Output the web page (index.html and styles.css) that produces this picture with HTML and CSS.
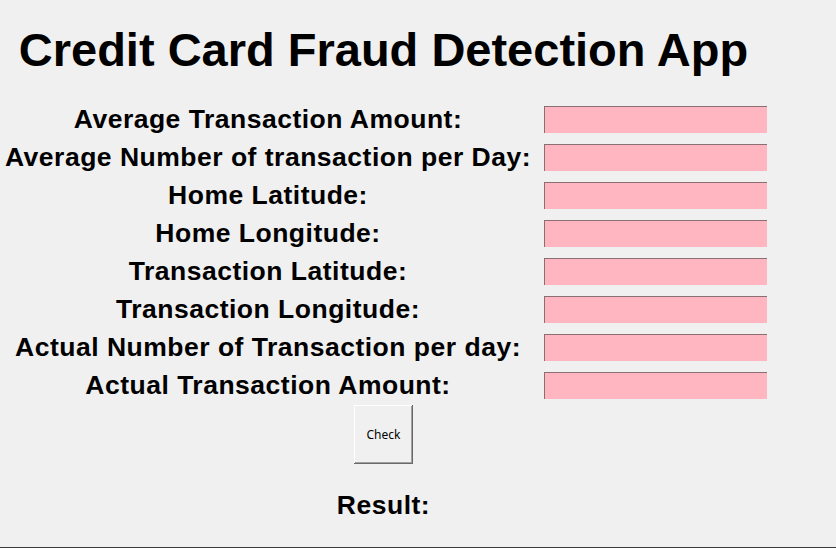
FILE: index.html
```html
<!DOCTYPE html>
<html>
<head>
<meta charset="utf-8">
<link rel="stylesheet" href="styles.css">
</head>
<body>
<div class="window">
  <div class="form">
    <h1 class="title">Credit Card Fraud Detection App</h1>
    <div class="label">Average Transaction Amount:</div><div class="cell"><div class="entry"></div></div>
    <div class="label">Average Number of transaction per Day:</div><div class="cell"><div class="entry"></div></div>
    <div class="label">Home Latitude:</div><div class="cell"><div class="entry"></div></div>
    <div class="label">Home Longitude:</div><div class="cell"><div class="entry"></div></div>
    <div class="label">Transaction Latitude:</div><div class="cell"><div class="entry"></div></div>
    <div class="label">Transaction Longitude:</div><div class="cell"><div class="entry"></div></div>
    <div class="label">Actual Number of Transaction per day:</div><div class="cell"><div class="entry"></div></div>
    <div class="label">Actual Transaction Amount:</div><div class="cell"><div class="entry"></div></div>
    <div class="span"><button class="btn">Check</button></div>
    <div class="span result">Result:</div>
  </div>
</div>
</body>
</html>
```
FILE: styles.css
```css
html, body {
  margin: 0;
  padding: 0;
  background: #f0f0f0;
}
.window {
  width: 836px;
  height: 547px;
  border-bottom: 1px solid #3a3a3a;
  background: #f0f0f0;
  overflow: hidden;
}
.form {
  display: grid;
  grid-template-columns: 536px 231px;
  grid-auto-rows: 38px;
  grid-template-rows: 100px;
  font-family: "Liberation Sans", Arial, sans-serif;
  font-weight: bold;
  color: #000;
}
.title {
  grid-column: 1 / 3;
  margin: 0;
  font-size: 47px;
  font-weight: bold;
  text-align: center;
  line-height: 100px;
  height: 100px;
}
.label {
  font-size: 26.5px;
  letter-spacing: 0.5px;
  text-align: center;
  line-height: 38px;
  white-space: nowrap;
}
.cell {
  padding-top: 6px;
  padding-left: 8px;
}
.entry {
  width: 222px;
  height: 26px;
  background: #ffb6c1;
  border-top: 1px solid #8a6e72;
  border-left: 1px solid #8a6e72;
}
.span {
  grid-column: 1 / 3;
  display: flex;
  justify-content: center;
}
.btn {
  margin-top: 1px;
  width: 59px;
  height: 59px;
  background: #f0f0f0;
  border: none;
  box-shadow: inset -1px -1px 0 #696969, inset 1px 1px 0 #ffffff, inset -2px -2px 0 #a0a0a0;
  font-family: "Noto Sans", "Open Sans", sans-serif;
  font-size: 12px;
  font-weight: normal;
  color: #000;
  padding: 0;
}
.result {
  margin-top: 48px;
  font-size: 26.5px;
  letter-spacing: 0.5px;
  line-height: 30px;
}
```
